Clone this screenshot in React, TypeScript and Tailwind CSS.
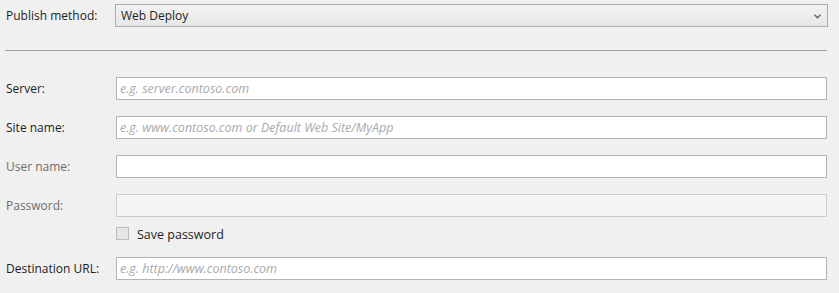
const FONT = "font-['Segoe_UI','Open_Sans','Noto_Sans',sans-serif]";

type Row = {
	label: string;
	placeholder?: string;
	disabled?: boolean;
	dim?: boolean;
};

const ROWS: Row[] = [
	{ label: "Server:", placeholder: "e.g. server.contoso.com" },
	{ label: "Site name:", placeholder: "e.g. www.contoso.com or Default Web Site/MyApp" },
	{ label: "User name:", dim: true },
	{ label: "Password:", dim: true, disabled: true },
];

function Field({ row }: { row: Row }) {
	return (
		<div className="flex items-center h-[23px]">
			<label
				className={`w-[116px] shrink-0 pl-[6px] text-[12px] ${
					row.dim ? "text-[#6d6d6d]" : "text-[#1e1e1e]"
				}`}>
				{row.label}
			</label>
			<input
				disabled={row.disabled}
				placeholder={row.placeholder}
				className={`w-[711px] h-[23px] border px-[3px] text-[12.5px] italic outline-none placeholder:text-[#a9a9a9] ${
					row.disabled
						? "bg-[#f5f5f5] border-[#cccccc]"
						: "bg-white border-[#b4b4b4]"
				}`}
			/>
		</div>
	);
}

export default function App() {
	return (
		<div className={`w-[839px] h-[293px] bg-[#f0f0f0] pt-[4px] ${FONT}`}>
			{/* Publish method */}
			<div className="flex items-center h-[23px]">
				<span className="w-[115px] shrink-0 pl-[6px] text-[12px] text-[#1e1e1e]">
					Publish method:
				</span>
				<div className="w-[713px] h-[23px] flex items-center justify-between border border-[#acacac] bg-gradient-to-b from-[#f3f3f3] to-[#e6e6e6] pl-[5px] pr-[6px] text-[12px] text-[#1e1e1e]">
					<span>Web Deploy</span>
					<svg width="7" height="5" viewBox="0 0 7 5" className="mt-[1px]">
						<path d="M0.5 0.8 L3.5 3.8 L6.5 0.8" fill="none" stroke="#606060" strokeWidth="1.3" />
					</svg>
				</div>
			</div>

			{/* Separator */}
			<div className="ml-[5px] mt-[23px] w-[822px] h-px bg-[#a0a0a0]" />

			<div className="mt-[26px] flex flex-col gap-[16px]">
				{ROWS.map((row) => (
					<Field key={row.label} row={row} />
				))}
			</div>

			{/* Save password */}
			<div className="mt-[10px] ml-[116px] flex items-center h-[13px] gap-[8px]">
				<span className="w-[13px] h-[13px] border border-[#bcbcbc] bg-[#e6e6e6]" />
				<span className="pt-[3px] text-[12.5px] text-[#1e1e1e]">Save password</span>
			</div>

			<div className="mt-[17px]">
				<Field row={{ label: "Destination URL:", placeholder: "e.g. http://www.contoso.com" }} />
			</div>
		</div>
	);
}
